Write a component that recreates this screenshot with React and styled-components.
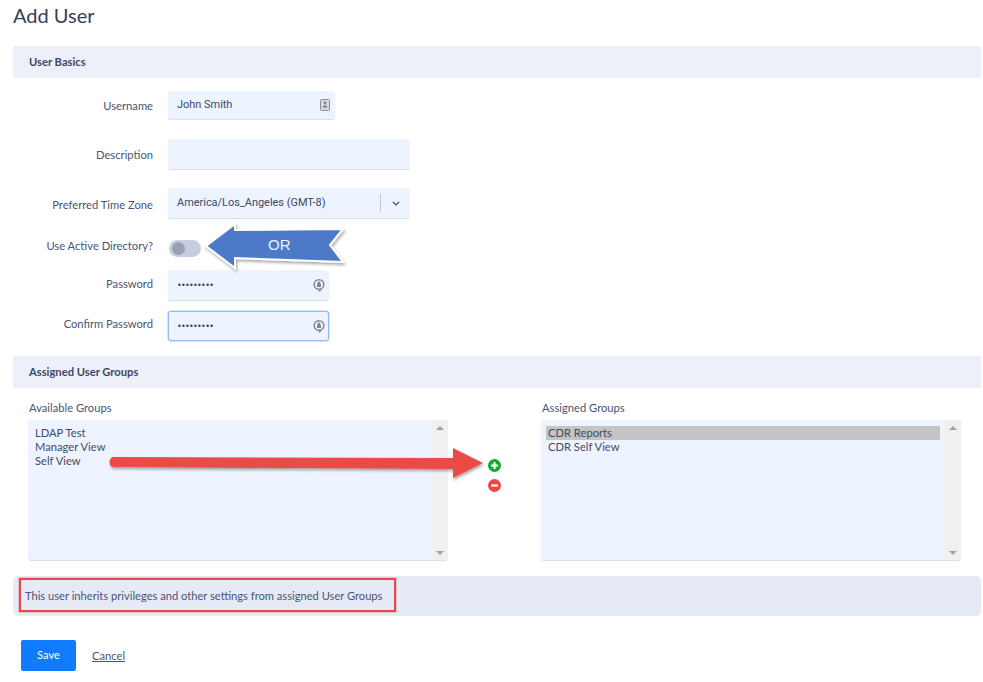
import React from "react";
import styled, { createGlobalStyle } from "styled-components";

const Global = createGlobalStyle`
  html, body { margin: 0; padding: 0; background: #fff; }
  body { font-family: Lato, "Liberation Sans", sans-serif; color: #3c4866; }
`;

const Page = styled.div`
  position: relative;
  width: 983px;
  height: 682px;
  overflow: hidden;
  padding: 4px 2px 0 13px;
  box-sizing: border-box;
`;

const Title = styled.h1`
  margin: 0 0 20px;
  height: 22px;
  font-size: 20px;
  line-height: 22px;
  font-weight: 400;
  color: #343f5a;
`;

const SectionHead = styled.div`
  height: 32px;
  background: #edf0f8;
  padding: 0 0 2px 16px;
  box-sizing: border-box;
  display: flex;
  align-items: center;
  font-size: 11.2px;
  font-weight: 700;
  color: #3c4866;
`;

const Form = styled.div`
  padding: 13px 0 15px;
  display: flex;
  flex-direction: column;
`;

const Row = styled.div`
  display: grid;
  grid-template-columns: 140px auto;
  grid-template-rows: ${(p) => p.$h}px;
  column-gap: 15px;
  align-items: center;
  justify-content: start;
  height: ${(p) => p.$h}px;
  margin-bottom: ${(p) => p.$mb}px;
`;

const Label = styled.label`
  text-align: right;
  font-size: 11.2px;
  color: #4a5573;
  white-space: nowrap;
  padding-bottom: ${(p) => p.$up || 0}px;
  padding-top: ${(p) => p.$down || 0}px;
`;

const Field = styled.div`
  width: ${(p) => p.$w}px;
  height: ${(p) => p.$h || 30}px;
  box-sizing: border-box;
  background: #edf4ff;
  border-radius: 3px;
  border: ${(p) => (p.$focus ? "1px solid #93bdf8" : "0")};
  box-shadow: ${(p) => (p.$focus ? "0 0 0 0.5px #a9caf8" : "0 1px 1px #d8dce6")};
  display: flex;
  align-items: center;
  padding: 0 ${(p) => p.$pr ?? 8}px 0 ${(p) => (p.$focus ? 8 : 9)}px;
  font-family: Roboto, "Liberation Sans", sans-serif;
  font-size: 10.95px;
  color: #3c4866;
`;

const FieldText = styled.span`
  flex: 1;
  white-space: nowrap;
  padding-bottom: 2px;
`;

const Dots = styled.span`
  flex: 1;
  font-family: "DejaVu Sans", sans-serif;
  font-size: 8px;
  letter-spacing: -0.7px;
  color: #3a3f60;
`;

const Divider = styled.span`
  width: 1px;
  height: 18px;
  background: #c5c8cf;
  margin-right: 11px;
`;

const Toggle = styled.div`
  width: 32px;
  height: 17px;
  border-radius: 9px;
  background: #c6cde0;
  padding: 2px 3px;
  box-sizing: border-box;
  margin-left: 1px;
`;

const Knob = styled.div`
  width: 13px;
  height: 13px;
  border-radius: 50%;
  background: #9aa0b3;
`;

const Groups = styled.div`
  display: grid;
  grid-template-columns: 420px 93px 420px;
  padding: 13px 0 16px 15px;
`;

const GroupCol = styled.div`
  display: flex;
  flex-direction: column;
`;

const GroupLabel = styled.div`
  height: 14px;
  line-height: 14px;
  font-size: 11.2px;
  color: #4a5573;
  margin-bottom: 5px;
  padding-left: 1px;
`;

const ListBox = styled.div`
  height: 140px;
  background: #edf4ff;
  border-radius: 3px;
  box-shadow: 0 1px 1px #d8dce6;
  display: flex;
  overflow: hidden;
`;

const ListItems = styled.div`
  flex: 1;
  padding: 6px 4px 0 5px;
  font-size: 11.2px;
  line-height: 14px;
  color: #3f4a68;
`;

const ListItem = styled.div`
  padding-left: 2px;
  background: ${(p) => (p.$selected ? "#c4c4c4" : "transparent")};
`;

const Scrollbar = styled.div`
  width: 17px;
  background: #f0f0f0;
  display: flex;
  flex-direction: column;
  justify-content: space-between;
  align-items: center;
  padding: 6px 0 5px;
  box-sizing: border-box;
`;

const ScrollArrow = styled.span`
  width: 0;
  height: 0;
  border-left: 4px solid transparent;
  border-right: 4px solid transparent;
  ${(p) => (p.$down ? "border-top: 4px solid #a3a3a3;" : "border-bottom: 4px solid #a3a3a3;")}
`;

const MoveButtons = styled.div`
  display: flex;
  flex-direction: column;
  gap: 7px;
  align-items: center;
  padding: 58px 0 0 0;
`;

const MoveIcon = styled.svg`
  width: 13px;
  height: 13px;
  display: block;
`;

const InfoBar = styled.div`
  height: 40px;
  background: #e5eaf6;
  border-radius: 5px;
  display: flex;
  align-items: center;
  padding: 0 0 2px 12px;
  box-sizing: border-box;
  font-size: 11.15px;
  color: #4a5573;
`;

const Actions = styled.div`
  display: flex;
  align-items: center;
  gap: 16px;
  padding: 24px 0 0 8px;
`;

const SaveButton = styled.button`
  width: 55px;
  height: 31px;
  background: #107bff;
  border: 0;
  border-radius: 2px;
  color: #fff;
  font-family: inherit;
  font-size: 11.2px;
  padding: 0 0 2px;
`;

const CancelLink = styled.a`
  font-size: 11.2px;
  color: #4a5573;
  text-decoration: underline;
`;

const Overlay = styled.svg`
  position: absolute;
  left: 0;
  top: 0;
  width: 983px;
  height: 682px;
  pointer-events: none;
`;

const ArrowText = styled.div`
  position: absolute;
  left: 268px;
  top: 236px;
  font-family: "Liberation Sans", sans-serif;
  font-size: 15px;
  line-height: 18px;
  color: #eef2fa;
`;

const RedBox = styled.div`
  position: absolute;
  left: 19px;
  top: 578px;
  width: 377px;
  height: 34px;
  box-sizing: border-box;
  border: 2px solid #e8474a;
  box-shadow: 0 0 0 0.5px rgba(232, 71, 74, 0.5);
`;

const ContactIcon = () => (
  <svg width="10" height="12" viewBox="0 0 10 12" style={{ flex: "none", marginBottom: 1 }}>
    <rect x="0.5" y="0.5" width="9" height="11" rx="1" fill="#d6d9de" stroke="#8b8f96" />
    <circle cx="5" cy="4" r="1.4" fill="#7c8087" />
    <path d="M2.6 8.6c0-1.5 1-2.4 2.4-2.4s2.4.9 2.4 2.4z" fill="#7c8087" />
  </svg>
);

const KeyIcon = () => (
  <svg width="12" height="14" viewBox="0 0 12 14" style={{ flex: "none" }}>
    <circle cx="6" cy="6.5" r="4.8" fill="none" stroke="#85898f" strokeWidth="1.5" />
    <circle cx="6" cy="5" r="1.6" fill="#7f838a" />
    <rect x="4" y="6" width="4" height="3" rx=".5" fill="#7f838a" />
    <path d="M6 11v3l2.4-1.5z" fill="#85898f" />
  </svg>
);

const Chevron = () => (
  <svg width="8" height="5" viewBox="0 0 8 5" style={{ flex: "none", marginRight: 1 }}>
    <path d="M.8.8 4 4l3.2-3.2" fill="none" stroke="#3c4866" strokeWidth="1.2" />
  </svg>
);

const Password = ({ focus }) => (
  <Field $w={161} $focus={focus} $pr={focus ? 3 : 4}>
    <Dots>•••••••••</Dots>
    <KeyIcon />
  </Field>
);

export default function App() {
  return (
    <Page>
      <Global />
      <Title>Add User</Title>
      <SectionHead>User Basics</SectionHead>
      <Form>
        <Row $h={28} $mb={20}>
          <Label>Username</Label>
          <Field $w={167} $h={28} $pr={5}>
            <FieldText>John Smith</FieldText>
            <ContactIcon />
          </Field>
        </Row>
        <Row $h={30} $mb={19}>
          <Label>Description</Label>
          <Field $w={242} />
        </Row>
        <Row $h={30} $mb={22}>
          <Label $down={2}>Preferred Time Zone</Label>
          <Field $w={242} $pr={9}>
            <FieldText>America/Los_Angeles (GMT-8)</FieldText>
            <Divider />
            <Chevron />
          </Field>
        </Row>
        <Row $h={17} $mb={13}>
          <Label $up={6}>Use Active Directory?</Label>
          <Toggle>
            <Knob />
          </Toggle>
        </Row>
        <Row $h={30} $mb={11}>
          <Label $up={4}>Password</Label>
          <Password />
        </Row>
        <Row $h={30} $mb={0}>
          <Label $up={6}>Confirm Password</Label>
          <Password focus />
        </Row>
      </Form>
      <SectionHead>Assigned User Groups</SectionHead>
      <Groups>
        <GroupCol>
          <GroupLabel>Available Groups</GroupLabel>
          <ListBox>
            <ListItems>
              <ListItem>LDAP Test</ListItem>
              <ListItem>Manager View</ListItem>
              <ListItem>Self View</ListItem>
            </ListItems>
            <Scrollbar>
              <ScrollArrow />
              <ScrollArrow $down />
            </Scrollbar>
          </ListBox>
        </GroupCol>
        <MoveButtons>
          <MoveIcon viewBox="0 0 12 12">
            <circle cx="6" cy="6" r="6" fill="#17a832" />
            <path d="M6 2.8v6.4M2.8 6h6.4" stroke="#fff" strokeWidth="2" />
          </MoveIcon>
          <MoveIcon viewBox="0 0 12 12">
            <circle cx="6" cy="6" r="6" fill="#e8474a" />
            <path d="M2.8 6h6.4" stroke="#fff" strokeWidth="2" />
          </MoveIcon>
        </MoveButtons>
        <GroupCol>
          <GroupLabel>Assigned Groups</GroupLabel>
          <ListBox>
            <ListItems>
              <ListItem $selected>CDR Reports</ListItem>
              <ListItem>CDR Self View</ListItem>
            </ListItems>
            <Scrollbar>
              <ScrollArrow />
              <ScrollArrow $down />
            </Scrollbar>
          </ListBox>
        </GroupCol>
      </Groups>
      <InfoBar>This user inherits privileges and other settings from assigned User Groups</InfoBar>
      <Actions>
        <SaveButton>Save</SaveButton>
        <CancelLink>Cancel</CancelLink>
      </Actions>

      <RedBox />
      <Overlay viewBox="0 0 983 682">
        <defs>
          <filter id="sh" x="-10%" y="-30%" width="125%" height="170%">
            <feDropShadow dx="1" dy="2" stdDeviation="1.8" floodColor="#000" floodOpacity="0.35" />
          </filter>
        </defs>
        <polygon
          points="206,246 235,224 235,230 343,229 330,245 343,262 235,258 235,268"
          fill="#4d7ac8"
          stroke="#fff"
          strokeWidth="2"
          filter="url(#sh)"
        />
        <path
          d="M112 457 L453 458 L453 448 L483 463 L453 478 L453 469 L112 467 Q107 462 112 457Z"
          fill="#e94c47"
          filter="url(#sh)"
        />
      </Overlay>
      <ArrowText>OR</ArrowText>
    </Page>
  );
}
